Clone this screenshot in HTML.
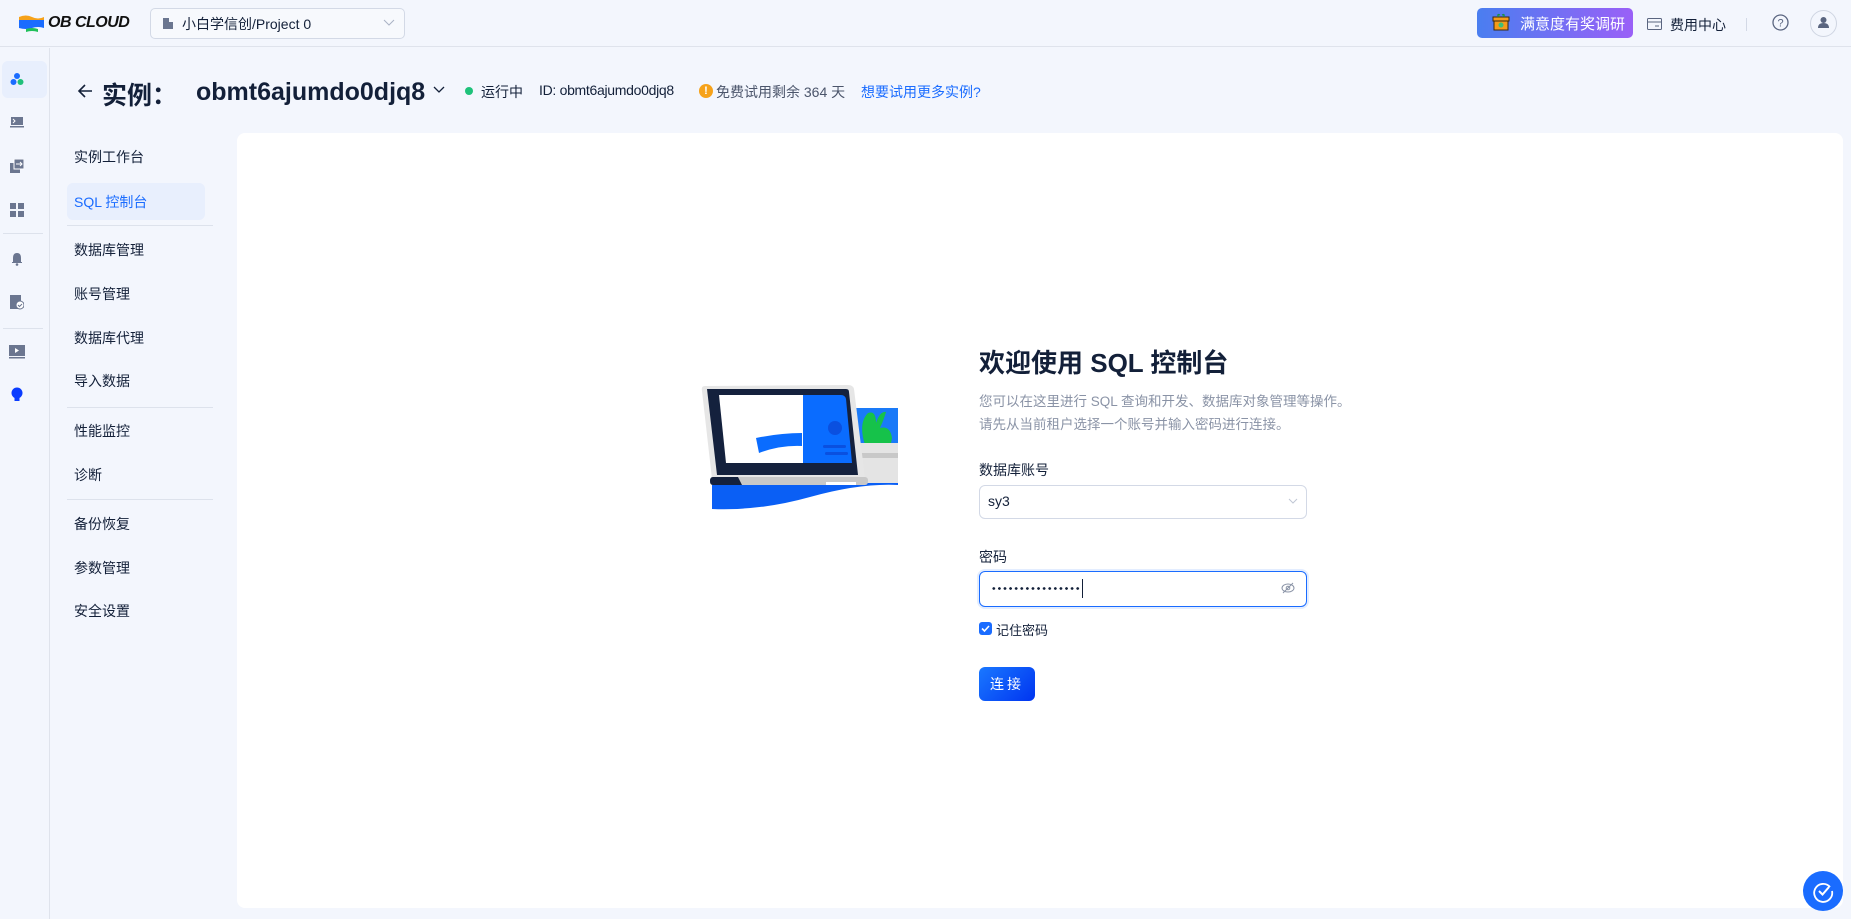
<!DOCTYPE html>
<html><head><meta charset="utf-8"><style>
*{box-sizing:border-box;margin:0;padding:0}
body{width:1851px;height:919px;overflow:hidden;background:#f3f6fd;font-family:"Liberation Sans","Noto Sans CJK SC",sans-serif;color:#132039;position:relative}
.abs{position:absolute}
.hdr{left:0;top:0;width:1851px;height:47px;border-bottom:1px solid #dfe3ec}
.rail{left:0;top:48px;width:50px;height:871px;border-right:1px solid #dfe3ec}
.nav{left:74px;font-size:14px;color:#132039;line-height:20px}
.div{height:1px;background:#dde2ec}
.card{left:237px;top:133px;width:1606px;height:775px;background:#fff;border-radius:8px}
</style></head><body>
<div class="abs hdr"></div>
<svg class="abs" style="left:18px;top:14px" width="28" height="20" viewBox="0 0 28 20"><path d="M1 3 Q8 0 14 3 T26 3 V6 H1Z" fill="#f6a21a"/><path d="M1 6 H26 V14 Q20 12 14 14 T1 14Z" fill="#1a6cff"/><path d="M8 15 Q14 13 20 15 V18 Q14 16 8 18Z" fill="#20c05a"/></svg>
<div class="abs" style="left:48px;top:14px;font-size:16px;font-weight:bold;font-style:italic;letter-spacing:-0.5px;color:#111">OB CLOUD</div>
<div class="abs" style="left:150px;top:8px;width:255px;height:31px;border:1px solid #d3d9e6;border-radius:5px;background:#f7f9fd"></div>
<svg class="abs" style="left:162px;top:16px" width="12" height="14" viewBox="0 0 12 14"><rect x="1" y="2" width="6" height="11" fill="#6b7690"/><rect x="7" y="6" width="4" height="7" fill="#6b7690"/></svg>
<div class="abs" style="left:182px;top:14px;font-size:14px">小白学信创/Project 0</div>
<svg class="abs" style="left:383px;top:19px" width="12" height="8"><path d="M1 1 L6 6 L11 1" stroke="#aab2c4" fill="none"/></svg>
<div class="abs" style="left:1477px;top:8px;width:156px;height:30px;border-radius:5px;background:linear-gradient(90deg,#4a7ef0,#9a60f7)"></div>
<svg class="abs" style="left:1492px;top:12px" width="18" height="20" viewBox="0 0 18 20"><rect x="2" y="6" width="14" height="12" fill="#f59b1a" stroke="#3a2a10"/><rect x="1" y="5" width="16" height="4" fill="#f59b1a" stroke="#3a2a10"/><circle cx="9" cy="13" r="2.5" fill="#3cc07a"/><path d="M6 5 Q5 1 8 3 M12 5 Q13 1 10 3" stroke="#1a8a4a" fill="#2aa060"/></svg>
<div class="abs" style="left:1520px;top:13px;font-size:15px;color:#fff">满意度有奖调研</div>
<svg class="abs" style="left:1647px;top:18px" width="15" height="12"><rect x="0.5" y="0.5" width="14" height="11" rx="1" fill="none" stroke="#5a6580"/><line x1="1" y1="4" x2="14" y2="4" stroke="#5a6580"/><line x1="8" y1="8" x2="12" y2="8" stroke="#5a6580"/></svg>
<div class="abs" style="left:1670px;top:15px;font-size:14px">费用中心</div>
<div class="abs" style="left:1746px;top:18px;width:1px;height:13px;background:#d3d9e6"></div>
<svg class="abs" style="left:1772px;top:14px" width="17" height="17"><circle cx="8.5" cy="8.5" r="7.5" fill="none" stroke="#5a6580" stroke-width="1.3"/><text x="8.5" y="12.5" font-size="11" text-anchor="middle" fill="#5a6580" font-family="Liberation Sans">?</text></svg>
<div class="abs" style="left:1810px;top:10px;width:27px;height:27px;border-radius:50%;border:1px solid #cfd5e2"></div>
<svg class="abs" style="left:1817px;top:16px" width="13" height="13"><circle cx="6.5" cy="4" r="3" fill="#5a6580"/><path d="M1 12 Q1 7 6.5 7 Q12 7 12 12Z" fill="#5a6580"/></svg>

<div class="abs rail"></div>
<div class="abs" style="left:2px;top:61px;width:45px;height:37px;background:#e8effd;border-radius:6px"></div>
<svg class="abs" style="left:10px;top:72px" width="14" height="14"><circle cx="7" cy="4" r="3" fill="#1a6cff"/><circle cx="3.5" cy="10" r="3" fill="#1a6cff"/><circle cx="10.5" cy="10" r="3" fill="#20c07a"/></svg>
<svg class="abs" style="left:10px;top:116px" width="14" height="12"><rect x="1" y="1" width="12" height="8" fill="#6b7690"/><rect x="0" y="10" width="14" height="1.5" fill="#6b7690"/><path d="M3 3 L5 5 L3 7" stroke="#fff" fill="none"/></svg>
<svg class="abs" style="left:10px;top:159px" width="14" height="14"><rect x="0" y="4" width="10" height="10" fill="#6b7690"/><rect x="4" y="0" width="10" height="10" fill="#6b7690" stroke="#fff"/><path d="M6 5 H12 M10 3 L12 5 L10 7" stroke="#fff" fill="none"/></svg>
<svg class="abs" style="left:10px;top:203px" width="14" height="14"><rect x="0" y="0" width="6" height="6" fill="#6b7690"/><rect x="8" y="0" width="6" height="6" fill="#6b7690"/><rect x="0" y="8" width="6" height="6" fill="#6b7690"/><rect x="8" y="8" width="6" height="6" fill="#6b7690"/></svg>
<div class="abs div" style="left:3px;top:233px;width:40px"></div>
<svg class="abs" style="left:11px;top:252px" width="12" height="14"><path d="M2 10 V6 Q2 1 6 1 Q10 1 10 6 V10 H11 V11 H1 V10Z" fill="#6b7690"/><circle cx="6" cy="12.5" r="1.3" fill="#6b7690"/></svg>
<svg class="abs" style="left:10px;top:295px" width="14" height="15"><rect x="0" y="0" width="11" height="14" fill="#6b7690"/><circle cx="10" cy="10" r="4" fill="#fff" stroke="#6b7690"/><path d="M8 10 L9.5 11.5 L12 9" stroke="#6b7690" fill="none"/></svg>
<div class="abs div" style="left:3px;top:328px;width:40px"></div>
<svg class="abs" style="left:9px;top:345px" width="16" height="14"><rect x="0" y="0" width="16" height="11" fill="#6b7690"/><rect x="0" y="12" width="16" height="1.5" fill="#6b7690"/><path d="M6 3 L10 5.5 L6 8Z" fill="#fff"/></svg>
<svg class="abs" style="left:11px;top:387px" width="12" height="16"><circle cx="6" cy="6" r="5.5" fill="#0a3cff"/><rect x="3.5" y="10" width="5" height="4" fill="#0a3cff"/></svg>

<svg class="abs" style="left:77px;top:84px" width="16" height="14"><path d="M15 7 H2 M8 1 L2 7 L8 13" stroke="#132039" stroke-width="1.6" fill="none"/></svg>
<div class="abs" style="left:102px;top:76px;font-size:25px;font-weight:bold">实例：</div>
<div class="abs" style="left:196px;top:78px;font-size:25px;font-weight:bold">obmt6ajumdo0djq8</div>
<svg class="abs" style="left:433px;top:86px" width="12" height="8"><path d="M1 1 L6 6 L11 1" stroke="#132039" stroke-width="1.3" fill="none"/></svg>
<div class="abs" style="left:465px;top:87px;width:8px;height:8px;border-radius:50%;background:#1ec27a"></div>
<div class="abs" style="left:481px;top:82px;font-size:14px">运行中</div>
<div class="abs" style="left:539px;top:82px;font-size:14px;letter-spacing:-0.3px">ID: obmt6ajumdo0djq8</div>
<div class="abs" style="left:699px;top:84px;width:14px;height:14px;border-radius:50%;background:#f6a21a;color:#fff;font-size:11px;font-weight:bold;text-align:center;line-height:14px">!</div>
<div class="abs" style="left:716px;top:82px;font-size:14px;color:#4b556b">免费试用剩余 364 天</div>
<div class="abs" style="left:861px;top:82px;font-size:14px;color:#1a6cff">想要试用更多实例?</div>

<div class="abs" style="left:67px;top:183px;width:138px;height:37px;background:#e8effd;border-radius:6px"></div>
<div class="abs nav" style="top:147px">实例工作台</div>
<div class="abs nav" style="top:192px;color:#1a6cff">SQL 控制台</div>
<div class="abs div" style="left:67px;top:225px;width:146px"></div>
<div class="abs nav" style="top:240px">数据库管理</div>
<div class="abs nav" style="top:284px">账号管理</div>
<div class="abs nav" style="top:328px">数据库代理</div>
<div class="abs nav" style="top:371px">导入数据</div>
<div class="abs div" style="left:67px;top:407px;width:146px"></div>
<div class="abs nav" style="top:421px">性能监控</div>
<div class="abs nav" style="top:465px">诊断</div>
<div class="abs div" style="left:67px;top:499px;width:146px"></div>
<div class="abs nav" style="top:514px">备份恢复</div>
<div class="abs nav" style="top:558px">参数管理</div>
<div class="abs nav" style="top:601px">安全设置</div>

<div class="abs card"></div>
<svg class="abs" style="left:700px;top:383px" width="198" height="128" viewBox="0 0 198 128">
<path d="M12 92 H198 V102 Q160 100 110 114 Q60 128 12 126Z" fill="#0a5ff5"/>
<rect x="150" y="25" width="48" height="40" fill="#1a7af8"/>
<path d="M165 62 Q158 40 168 30 Q176 27 176 40 Q180 28 186 29 Q184 36 180 45 Q190 42 192 55 L190 65 H166Z" fill="#16c24a"/>
<rect x="150" y="60" width="48" height="40" fill="#e4e4e4"/>
<rect x="150" y="70" width="48" height="5" fill="#c8c8c8"/>
<path d="M5 3 Q1 3 2 8 L12 96 Q13 99 17 99 H162 Q166 99 165 95 L154 6 Q153 2 148 2Z" fill="#e6e6e6"/>
<path d="M7 6 H146 Q149 6 149 9 L158 92 H17Z" fill="#14213d"/>
<path d="M19 12 H103 V80 H26Z" fill="#fff"/>
<path d="M103 12 H141 Q145 12 146 16 L152 80 H103Z" fill="#0a6cff"/>
<circle cx="135" cy="45" r="7" fill="#0a50e0"/>
<rect x="123" y="62" width="23" height="3" rx="1.5" fill="#0a50e0"/><rect x="125" y="69" width="23" height="3" rx="1.5" fill="#0a50e0"/>
<path d="M56 55 Q80 50 102 50 V63 Q80 62 59 70Z" fill="#0a6cff"/>
<rect x="10" y="94" width="158" height="8" rx="3" fill="#c8c8c8"/>
<path d="M13 94 H38 L42 102 H13 Q10 102 10 98 Q10 94 13 94Z" fill="#14213d"/>
<rect x="126" y="99" width="30" height="3" fill="#fff"/>
</svg>
<div class="abs" style="left:979px;top:343px;font-size:26px;font-weight:bold">欢迎使用 SQL 控制台</div>
<div class="abs" style="left:979px;top:390px;font-size:13.5px;color:#8a93a6;line-height:23px">您可以在这里进行 SQL 查询和开发、数据库对象管理等操作。<br>请先从当前租户选择一个账号并输入密码进行连接。</div>
<div class="abs" style="left:979px;top:460px;font-size:14px">数据库账号</div>
<div class="abs" style="left:979px;top:485px;width:328px;height:34px;border:1px solid #d3d9e6;border-radius:6px"></div>
<div class="abs" style="left:988px;top:493px;font-size:14px">sy3</div>
<svg class="abs" style="left:1288px;top:498px" width="10" height="7"><path d="M1 1 L5 5 L9 1" stroke="#c0c6d4" fill="none"/></svg>
<div class="abs" style="left:979px;top:547px;font-size:14px">密码</div>
<div class="abs" style="left:979px;top:571px;width:328px;height:36px;border:1.5px solid #1a6cff;border-radius:6px;box-shadow:0 0 0 2px #e3edff"></div>
<div class="abs" style="left:991px;top:587px;width:90px;height:3px;background:radial-gradient(circle,#132039 1.2px,transparent 1.5px) 0 0/5.6px 3px repeat-x"></div>
<div class="abs" style="left:1082px;top:579px;width:1px;height:19px;background:#132039"></div>
<svg class="abs" style="left:1281px;top:582px" width="14" height="12"><ellipse cx="7" cy="6" rx="6" ry="4" fill="none" stroke="#8a93a6"/><circle cx="7" cy="6" r="1.8" fill="none" stroke="#8a93a6"/><line x1="2" y1="11" x2="12" y2="1" stroke="#8a93a6"/></svg>
<div class="abs" style="left:979px;top:622px;width:13px;height:13px;border-radius:3px;background:#1a6cff"></div>
<svg class="abs" style="left:981px;top:624px" width="9" height="9"><path d="M1 4.5 L3.5 7 L8 2" stroke="#fff" stroke-width="1.6" fill="none"/></svg>
<div class="abs" style="left:996px;top:620px;font-size:13px">记住密码</div>
<div class="abs" style="left:979px;top:667px;width:56px;height:34px;border-radius:6px;background:linear-gradient(135deg,#1a78ff,#0034f0);color:#fff;font-size:14px;text-align:center;line-height:34px;letter-spacing:3px">连接</div>

<div class="abs" style="left:1803px;top:871px;width:40px;height:40px;border-radius:50%;background:#1a6cff"></div>
<svg class="abs" style="left:1811px;top:879px" width="24" height="24"><path d="M19 8 A9 9 0 1 0 21 12" stroke="#fff" stroke-width="1.8" fill="none"/><path d="M8 12 L11.5 15.5 L18 8" stroke="#fff" stroke-width="2" fill="none"/></svg>
</body></html>
